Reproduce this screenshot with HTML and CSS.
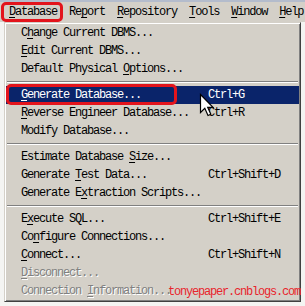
FILE: index.html
```html
<!DOCTYPE html>
<html lang="en">
<head>
  <meta charset="UTF-8">
  <title>Database menu</title>
  <link rel="stylesheet" href="styles.css">
</head>
<body>
  <div class="screen">
    <div class="menubar">
      <span class="mb-item mb-open"><u>D</u>atabase</span>
      <span class="mb-item">Re<u>p</u>ort</span>
      <span class="mb-item"><u>R</u>epository</span>
      <span class="mb-item"><u>T</u>ools</span>
      <span class="mb-item"><u>W</u>indow</span>
      <span class="mb-item"><u>H</u>elp</span>
    </div>

    <div class="desk">
      <div class="dropdown">
        <div class="mi"><span>C<u>h</u>ange Current DBMS...</span></div>
        <div class="mi"><span><u>E</u>dit Current DBMS...</span></div>
        <div class="mi"><span>Default Physical <u>O</u>ptions...</span></div>
        <div class="sep"></div>
        <div class="mi mi-hot"><span><u>G</u>enerate Database...</span><span>Ctrl+G</span></div>
        <div class="mi"><span><u>R</u>everse Engineer Database...</span><span>Ctrl+R</span></div>
        <div class="mi"><span>Modify Database...</span></div>
        <div class="sep"></div>
        <div class="mi"><span>Estimate Database <u>S</u>ize...</span></div>
        <div class="mi"><span>Generate <u>T</u>est Data...</span><span>Ctrl+Shift+D</span></div>
        <div class="mi"><span>Generate E<u>x</u>traction Scripts...</span></div>
        <div class="sep"></div>
        <div class="mi"><span>E<u>x</u>ecute SQL...</span><span>Ctrl+Shift+E</span></div>
        <div class="mi"><span>Co<u>n</u>figure Connections...</span></div>
        <div class="mi"><span><u>C</u>onnect...</span><span>Ctrl+Shift+N</span></div>
        <div class="mi mi-off"><span><u>D</u>isconnect...</span></div>
        <div class="mi mi-off"><span>Connection <u>I</u>nformation...</span></div>
      </div>
    </div>

    <!-- mouse pointer over the highlighted item -->
    <svg class="cursor" width="15" height="24" viewBox="0 0 15 24">
      <path d="M1.5 1.5 L1.5 19.5 L5.8 15.3 L9 22.5 L11.8 21.3 L8.7 14.3 L14 14.3 Z" fill="#fff" stroke="#000" stroke-width="1.2" stroke-linejoin="miter"/>
    </svg>

    <div class="watermark">tonyepaper.cnblogs.com</div>
  </div>
</body>
</html>
```

FILE: styles.css
```css
body {
  margin: 0;
  padding: 0;
  background: #f2f2f2;
  font-family: 'Liberation Mono', monospace;
  font-size: 12px;
  letter-spacing: -1.2px;
  color: #000;
  overflow: hidden;
}

u {
  text-decoration: underline;
  text-underline-offset: 2px;
}

.screen {
  position: relative;
  width: 305px;
  height: 306px;
  display: flex;
  flex-direction: column;
  overflow: hidden;
}

.menubar {
  display: flex;
  height: 20px;
  padding: 2px 0 0 3px;
  background: #d4d0c8;
  border-top: 0;
  box-shadow: inset 0 2px 0 #b4bccc;
}

.mb-item {
  position: relative;
  padding: 0 6px;
  line-height: 21px;
  white-space: nowrap;
}

.mb-open::after {
  content: '';
  position: absolute;
  left: -2px;
  top: 0;
  width: 56px;
  height: 14px;
  border: 3px solid #e3141c;
  border-radius: 5px;
}

.desk {
  flex: 1;
  display: flex;
  padding-left: 4px;
  background: #f4f4f2;
}

.dropdown {
  width: 293px;
  height: 276px;
  padding: 1px;
  background: #d4d0c8;
  border: 1px solid;
  border-color: #d4d0c8 #404040 #404040 #d4d0c8;
  box-shadow: inset 1px 1px 0 #fff, inset -1px -1px 0 #808080;
}

.mi {
  position: relative;
  display: grid;
  grid-template-columns: 187px 1fr;
  height: 18px;
  line-height: 18px;
  padding-left: 15px;
  white-space: nowrap;
}

.mi-hot {
  background: #0a246a;
  color: #fff;
}

.mi-hot::after {
  content: '';
  position: absolute;
  left: 0;
  top: -2px;
  width: 165px;
  height: 15px;
  border: 3px solid #e3141c;
  border-radius: 5px;
}

.mi-off {
  color: #808080;
  text-shadow: 1px 1px 0 #fff;
}

.sep {
  height: 8px;
  margin: 0 1px;
  display: flex;
  flex-direction: column;
  justify-content: center;
}

.sep::before {
  content: '';
  height: 1px;
  background: #808080;
  border-bottom: 1px solid #fff;
}

.cursor {
  position: absolute;
  left: 199px;
  top: 93px;
}

.watermark {
  position: absolute;
  left: 168px;
  top: 284px;
  color: #e8242c;
  line-height: 16px;
}
```
